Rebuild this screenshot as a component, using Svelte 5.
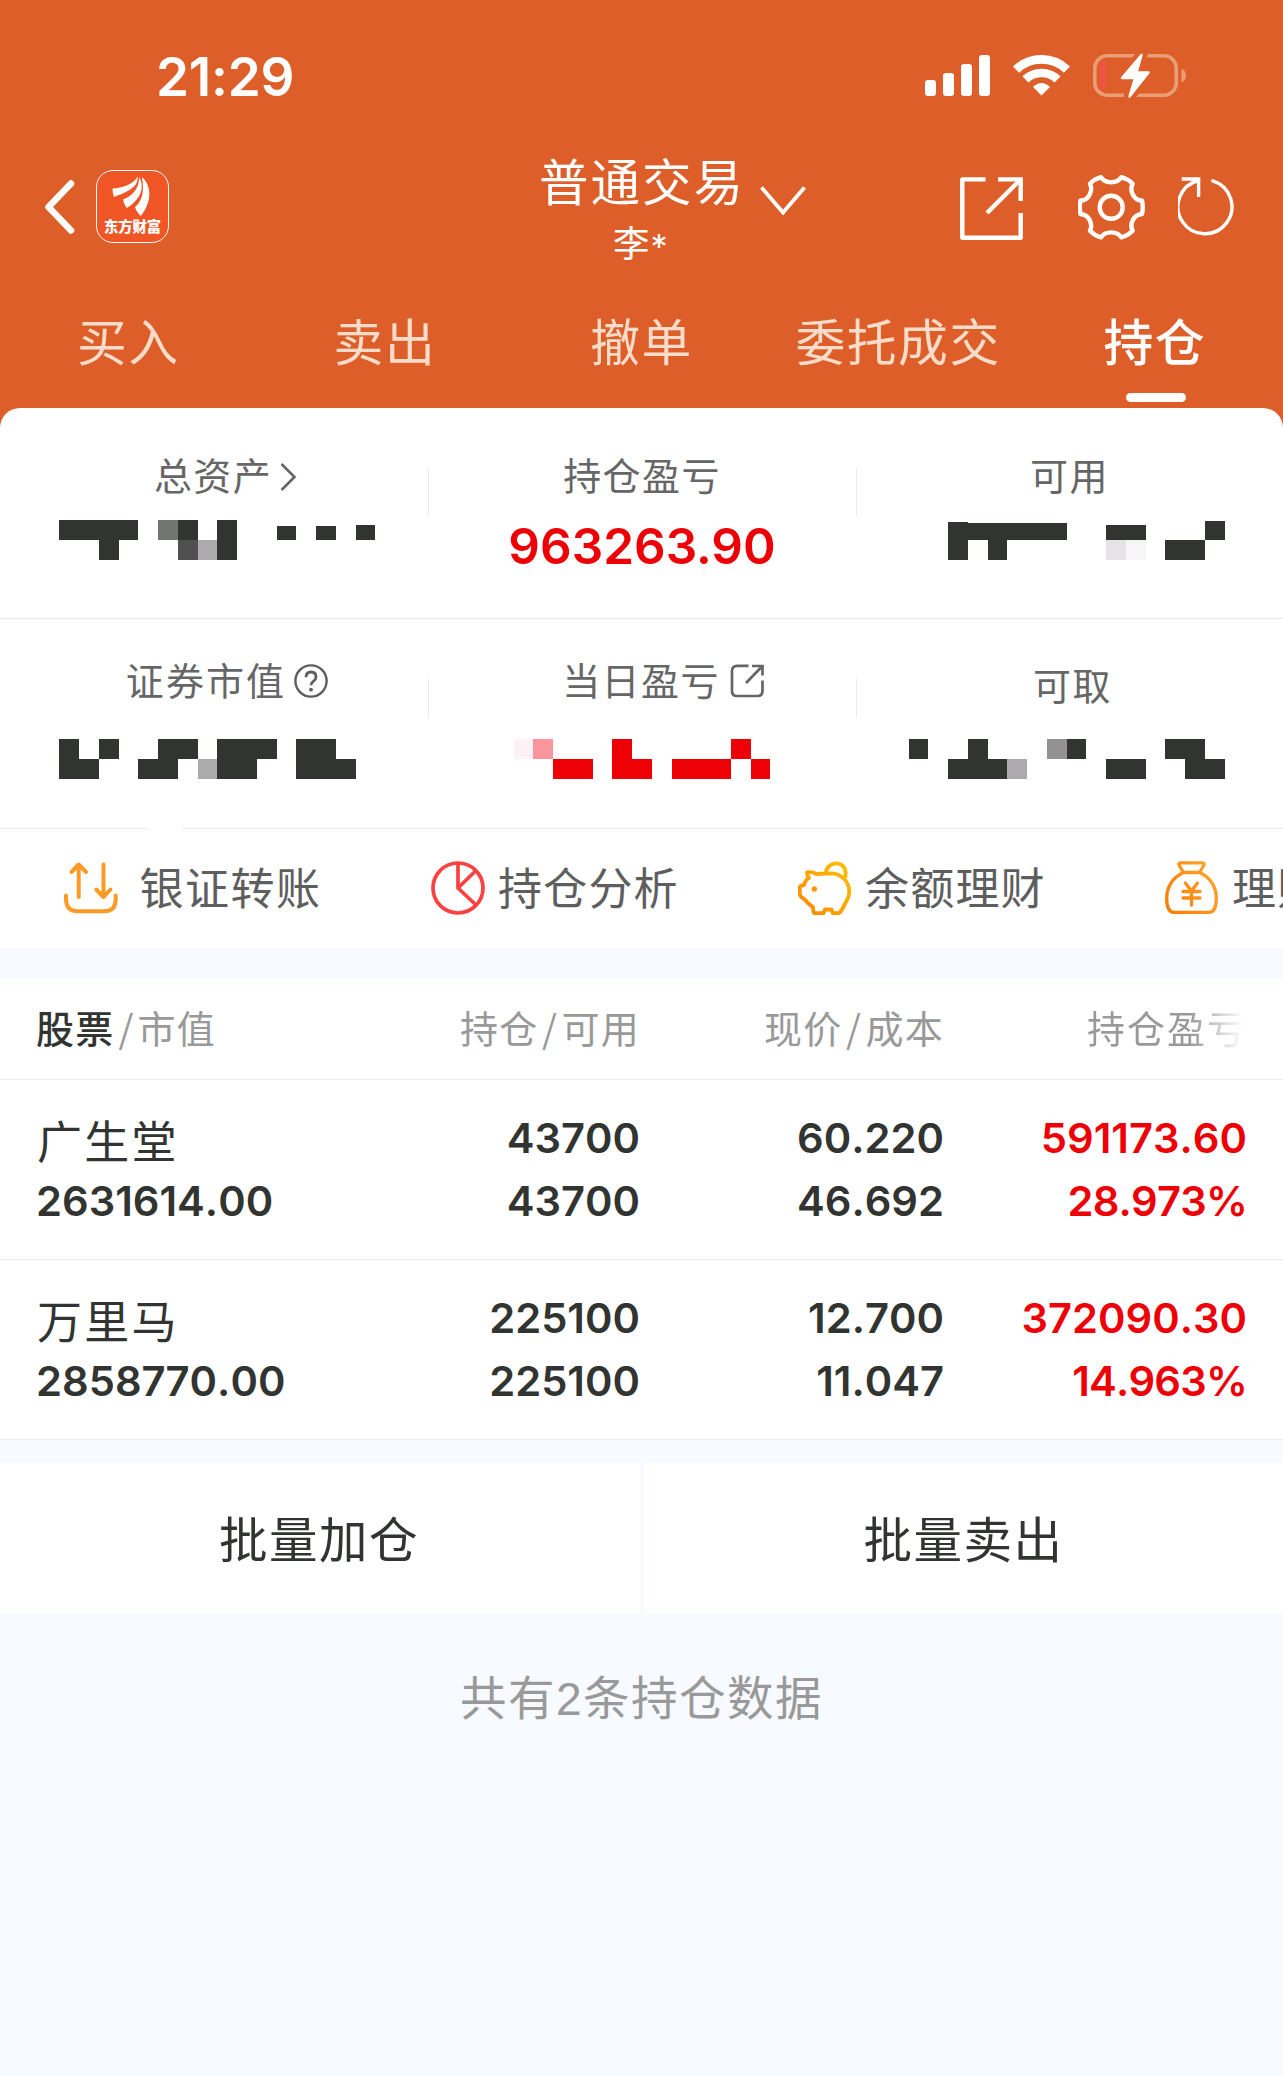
<script>
  const tabs = ['买入', '卖出', '撤单', '委托成交', '持仓'];
  const D = '#323431';
  const R = '#ee0007';

  // Masked amounts: blocks of [x, y, width, height, colour]
  const assets = [
    [59, 0, 79, 20, D], [99, 20, 20, 20, D], [158, 0, 20, 20, '#727572'], [178, 0, 20, 20, D],
    [178, 20, 20, 20, '#505051'], [198, 20, 19, 20, '#acaaad'], [217, 0, 20, 40, D],
    [277, 6, 19, 14, D], [316, 6, 20, 14, D], [356, 5, 19, 15, D]
  ];
  const available = [
    [948, 3, 119, 17, D], [948, 2, 20, 38, D], [988, 20, 19, 20, D], [1106, 5, 40, 15, D],
    [1106, 20, 20, 20, '#e6e2e6'], [1126, 20, 20, 20, '#f7f6f7'], [1165, 20, 40, 20, D], [1205, 1, 20, 19, D]
  ];
  const marketValue = [
    [59, 0, 20, 20, D], [99, 0, 20, 20, D], [59, 20, 40, 20, D], [158, 0, 40, 20, D], [138, 20, 40, 20, D],
    [198, 20, 19, 20, '#acaaad'], [217, 0, 60, 20, D], [217, 20, 40, 20, D], [296, 0, 40, 20, D], [296, 20, 60, 20, D]
  ];
  const today = [
    [514, 0, 19, 20, '#fff1f5'], [533, 0, 20, 20, '#f8959d'], [553, 20, 40, 20, R], [612, 0, 20, 20, R],
    [612, 20, 40, 20, R], [672, 20, 59, 20, R], [731, 0, 20, 20, R], [751, 20, 19, 20, R]
  ];
  const withdrawable = [
    [909, 0, 19, 20, D], [968, 0, 20, 20, D], [948, 20, 59, 20, D], [1007, 20, 20, 20, '#acaaad'],
    [1047, 0, 20, 20, '#949195'], [1067, 0, 19, 20, D], [1106, 20, 40, 20, D], [1165, 0, 40, 20, D], [1185, 20, 40, 20, D]
  ];

  const holdings = [
    { name: '广生堂', value: '2631614.00', qty: '43700', usable: '43700', price: '60.220', cost: '46.692', profit: '591173.60', rate: '28.973%' },
    { name: '万里马', value: '2858770.00', qty: '225100', usable: '225100', price: '12.700', cost: '11.047', profit: '372090.30', rate: '14.963%' }
  ];
</script>

{#snippet masked(blocks, col)}
  <svg class="mask" width="428" height="40" viewBox="{col * 428} 0 428 40" shape-rendering="crispEdges">
    {#each blocks as [x, y, w, h, fill]}
      <rect {x} {y} width={w} height={h} {fill} />
    {/each}
  </svg>
{/snippet}

<div class="app">
  <header>
    <div class="status">
      <span class="time">21:29</span>
      <div class="status-icons">
        <svg width="65" height="41" viewBox="0 0 65 41" fill="#fff">
          <rect x="0" y="25" width="11" height="16" rx="3" />
          <rect x="18" y="18" width="11" height="23" rx="3" />
          <rect x="36" y="9" width="11" height="32" rx="3" />
          <rect x="54" y="0" width="11" height="41" rx="3" />
        </svg>
        <svg class="wifi" width="57" height="42" viewBox="0 0 57 42" fill="none" stroke="#fff">
          <path d="M3 15.6A37 37 0 0 1 54 15.6" stroke-width="8.8" />
          <path d="M12.4 25.4A23.3 23.3 0 0 1 44.6 25.4" stroke-width="8.6" />
          <path d="M28.5 41.5L20 33Q28.5 24.8 37 33Z" fill="#fff" stroke="none" />
        </svg>
        <svg class="battery" width="94" height="46" viewBox="0 0 94 46">
          <rect x="1.8" y="2.8" width="81.5" height="39.4" rx="12.5" fill="none" stroke="#e99e76" stroke-width="3.6" />
          <rect x="6.5" y="8" width="6.5" height="29" rx="3" fill="#f05343" />
          <path d="M88.5 15.5Q93 17.5 93 22.5T88.5 29.5Z" fill="#e99e76" />
          <path d="M49 1.5L29 25H41.500L36 44L56 19.500H44Z" fill="#fff" stroke="#de5e29" stroke-width="11" stroke-linejoin="round" />
          <path d="M48.500 2L29 25H42L36.500 43.500L55.500 19.500H43.500Z" fill="#fff" stroke="#fff" stroke-width="2.500" stroke-linejoin="round" />
        </svg>
      </div>
    </div>

    <div class="nav">
      <svg class="back" width="32" height="54" viewBox="0 0 32 54" fill="none" stroke="#fff" stroke-width="6.500" stroke-linejoin="round" stroke-linecap="round">
        <path d="M27 3.500L4.500 27L27 50.500" />
      </svg>
      <div class="logo">
        <svg width="71" height="48" viewBox="0 0 71 48" fill="#fff">
          <path d="M15.700 17.500C25 17 37 13 40.500 5.500C42 16 30 21 17 26C15.800 23 15.500 20 15.700 17.500Z" />
          <path d="M26 28.500C36 25 42 17 42.300 6C49 19 41 30 29.800 37C28 34.500 26.500 31.500 26 28.500Z" />
          <path d="M38 36C45 30 47.500 22 45 6C55 15 55 31 43.800 45C41 42 38.500 39 38 36Z" />
        </svg>
        <span>东方财富</span>
      </div>
      <div class="title">
        <div class="account">普通交易</div>
        <div class="user">李<span>*</span></div>
      </div>
      <svg class="down" width="46" height="30" viewBox="0 0 46 30" fill="none" stroke="#fff" stroke-width="3.800">
        <path d="M1.500 1.500L23 26.500L44.500 1.500" />
      </svg>
      <div class="tools">
        <svg width="63" height="63" viewBox="0 0 63 63" fill="none" stroke="#fff" stroke-width="4.400" stroke-linejoin="round">
          <path d="M25.500 2.400H2.300V60.700H60.700V36" />
          <path d="M38 2.400H60.700V24" stroke-linejoin="miter" />
          <path d="M60 3L27 36" />
        </svg>
        <svg class="gear" width="67" height="65" viewBox="0 0 67 65" fill="none" stroke="#fff" stroke-width="4.400" stroke-linejoin="round">
          <path d="M23 2.200C27 9 39.300 9 43.300 2.200Q50 4 54.600 8.700C51 16 56 25.500 64 25.500Q65.500 32 64 39C56 39.500 51 48.500 54.600 55.700Q50 60.500 43.300 62.500C39.300 55.700 27 55.700 23 62.500Q16.500 60.500 12 55.700C15.500 48.500 10.500 39.500 2.500 39Q1 32 2.500 25.500C10.500 25.500 15.500 16 12 8.700Q16.500 4 23 2.200Z" />
          <circle cx="33.200" cy="32.300" r="11.500" />
        </svg>
        <svg width="58" height="60" viewBox="0 0 58 60" fill="none" stroke="#fff" stroke-width="3.400">
          <path d="M34.800 3.900A27 27 0 1 1 20.500 3.500" stroke-linecap="round" />
          <path d="M3.700 2H20.600V20" />
        </svg>
      </div>
    </div>

    <nav class="tabs">
      {#each tabs as tab, i}
        <div class="tab" class:active={i === 4}><span>{tab}</span></div>
      {/each}
    </nav>
  </header>

  <section class="summary">
    <div class="row">
      <div class="cell">
        <div class="label first">总资产<svg class="more" width="17" height="28" viewBox="0 0 17 28" fill="none" stroke="#666" stroke-width="2.600"><path d="M1.500 1L14.500 14L1.500 27" /></svg></div>
        {@render masked(assets, 0)}
      </div>
      <div class="cell">
        <div class="label">持仓盈亏</div>
        <div class="total">963263.90</div>
      </div>
      <div class="cell">
        <div class="label usable">可用</div>
        {@render masked(available, 2)}
      </div>
    </div>
    <div class="row second">
      <div class="cell">
        <div class="label first value">证券市值<svg class="help" width="34" height="34" viewBox="0 0 34 34" fill="none" stroke="#5e5e5e" stroke-width="2.400"><circle cx="17" cy="17" r="15.600" /><path d="M12 13.200Q12 8 17 8T22 13Q22 15.500 19.500 17.200T17 21.300" stroke-width="2.800" /><circle cx="17" cy="25.700" r="1.900" fill="#5e5e5e" stroke="none" /></svg></div>
        {@render masked(marketValue, 0)}
      </div>
      <div class="cell">
        <div class="label today">当日盈亏<svg class="open" width="34" height="34" viewBox="0 0 34 34" fill="none" stroke="#666" stroke-width="2.700"><path d="M18.500 1.800H7Q2 1.800 2 7V27Q2 32 7 32H27.500Q32.500 32 32.500 27V16.500" /><path d="M22 2H32.500V11.500" /><path d="M31.500 3L16 19" /></svg></div>
        {@render masked(today, 1)}
      </div>
      <div class="cell">
        <div class="label cash">可取</div>
        {@render masked(withdrawable, 2)}
      </div>
    </div>
    <div class="rule"><i></i><i></i></div>
    <div class="menu">
      <div class="item">
        <svg class="transfer" width="56" height="54" viewBox="0 0 56 54" fill="none" stroke="#fb9b26" stroke-width="4" stroke-linecap="round" stroke-linejoin="round">
          <path d="M15.700 36V3.500M8.500 11L15.700 3.500L23 11M40.500 3.500V36M33.300 28.500L40.500 36L47.500 28.500" />
          <path d="M3 34.500V38Q3 50.300 15 50.300H41Q52.700 50.300 52.700 38V34.500" />
        </svg>
        <span class="wide">银证转账</span>
      </div>
      <div class="item">
        <svg width="54" height="54" viewBox="0 0 54 54" fill="none" stroke="#fd4141" stroke-width="3.700" stroke-linejoin="round">
          <circle cx="27" cy="27" r="25" /><path d="M27 2V27L45 9.500M27 27L45 44" />
        </svg>
        <span>持仓分析</span>
      </div>
      <div class="item">
        <svg width="54" height="54" viewBox="0 0 54 54" fill="none" stroke="url(#gold)" stroke-width="3.800" stroke-linejoin="round">
          <defs><linearGradient id="gold" x1="0" y1="54" x2="54" y2="0" gradientUnits="userSpaceOnUse"><stop offset="0" stop-color="#ff8500" /><stop offset="1" stop-color="#ffc400" /></linearGradient></defs>
          <path d="M9 11.300Q15 10.500 18 13Q27 12.500 33 12.300C43 12.500 51.300 20 51.300 31Q51 36 49 39L44 48.500Q42 52.300 39.500 52.200H35L33.500 48.500H27L25.500 52.200H16.500Q15 52 15 46Q9 42 7 38.500Q2 36 1.800 33V26Q2.500 24.500 6 24Q7.500 18.500 11 17Q9 14.500 9 11.300Z" />
          <path d="M27.700 12.300C29 -1.500 51 -1.500 47.200 16.500" />
          <circle cx="16.300" cy="28" r="2.700" fill="#fb9800" stroke="none" />
        </svg>
        <span>余额理财</span>
      </div>
      <div class="item">
        <svg width="54" height="54" viewBox="0 0 54 54" fill="none" stroke="url(#amber)" stroke-width="3.300" stroke-linejoin="round" stroke-linecap="round">
          <defs><linearGradient id="amber" x1="0" y1="54" x2="54" y2="20" gradientUnits="userSpaceOnUse"><stop offset="0" stop-color="#ff7800" /><stop offset="1" stop-color="#ffa32d" /></linearGradient></defs>
          <path d="M18.500 11.500L14 4Q13.500 2 15.500 1.800H37.500Q39.500 2 39 4L34.500 11.500ZM18.500 11.500C7 16.500 1.700 27 1.700 37C1.700 43 3 51.300 9 51.300H44C50 51.300 51.300 43 51.300 37C51.300 27 46 16.500 34.500 11.500" />
          <path d="M20.300 22L26.500 30L32.500 22M18 30.500H35M18 37H35M26.500 30V44" />
        </svg>
        <span>理财</span>
      </div>
    </div>
  </section>

  <section class="holdings">
    <div class="thead">
      <div class="th left"><b>股票</b><s>/</s>市值</div>
      <div class="th">持仓<s>/</s>可用</div>
      <div class="th">现价<s>/</s>成本</div>
      <div class="th fade">持仓盈亏</div>
    </div>
    {#each holdings as h}
      <div class="stock">
        <div class="col left"><span class="name">{h.name}</span><span>{h.value}</span></div>
        <div class="col"><span>{h.qty}</span><span>{h.usable}</span></div>
        <div class="col"><span>{h.price}</span><span>{h.cost}</span></div>
        <div class="col red"><span>{h.profit}</span><span class="rate">{h.rate}</span></div>
      </div>
    {/each}
  </section>

  <div class="actions">
    <div class="action">批量加仓</div>
    <div class="action">批量卖出</div>
  </div>
  <p class="count">共有<span>2</span>条持仓数据</p>
</div>

<style>
  :global(body) { margin: 0; background: #f7faff; }
  .app {
    width: 1283px; height: 2076px; overflow: hidden;
    background: #f7faff; color: #323431;
    font-family: "Noto Sans CJK SC", sans-serif;
    white-space: nowrap;
  }
  .app * { box-sizing: border-box; }
  svg { display: block; flex: none; }

  header { height: 428px; background: #de5e29; color: #fff; }
  .status { height: 130px; padding: 45px 96px 0 156px; display: flex; justify-content: space-between; }
  .time { font: 600 53px/64px Inter, sans-serif; letter-spacing: -0.200px; }
  .status-icons { display: flex; align-items: flex-start; padding-top: 10px; }
  .wifi { margin: -1px 0 0 23px; }
  .battery { margin: -2px 0 0 23px; }

  .nav { height: 154px; padding-left: 44px; display: flex; align-items: flex-start; }
  .back { margin-top: 50px; }
  .logo {
    width: 73px; height: 73px; margin: 40px 0 0 20px; border: 1.500px solid #fff; border-radius: 17px;
    background: #f05526; display: flex; flex-direction: column; align-items: center;
  }
  .logo span { font: 900 14.300px/20px "Noto Sans CJK SC", sans-serif; margin-top: -3px; }
  .title { width: 210px; margin-left: 370px; padding-top: 18px; }
  .account { font-size: 49.500px; line-height: 64px; letter-spacing: 2px; }
  .user { font-size: 36.500px; line-height: 44px; height: 44px; margin-top: 8px; padding-left: 74px; letter-spacing: 1px; }
  .user span { font: 400 34px/0 Inter, sans-serif; vertical-align: -2px; }
  .down { margin: 56px 0 0 11px; }
  .tools { display: flex; align-items: flex-start; margin: 47px 0 0 154px; }
  .gear { margin: -2px 33px 0 55px; }

  .tabs { height: 124px; display: grid; grid-template-columns: repeat(5, 1fr); }
  .tab {
    position: relative; text-align: center; color: #f9dcc9;
    font-size: 49.800px; line-height: 64px; letter-spacing: 1.500px; padding: 23px 0 0 0;
  }
  .active { color: #fff; font-weight: 500; }
  .active::after {
    content: ""; position: absolute; left: 100px; top: 109px; width: 60px; height: 9px;
    border-radius: 5px; background: #fff;
  }

  .summary { position: relative; margin-top: -20px; height: 540px; background: #fff; border-radius: 20px 20px 0 0; overflow: hidden; }
  .row { height: 211px; display: grid; grid-template-columns: 428px 428px 427px; border-bottom: 1px solid #ebebeb; }
  .second { height: 209px; border-bottom: 0; }
  .cell { position: relative; overflow: hidden; }
  .cell + .cell::before { content: ""; position: absolute; left: 0; top: 60px; width: 1px; height: 48px; background: #ebebeb; }
  .second .cell + .cell::before { top: 59px; height: 40px; }
  .label {
    height: 50px; margin-top: 41px; padding: 0;
    display: flex; align-items: center; justify-content: center;
    color: #666; font-size: 38px; line-height: 50px; letter-spacing: 1.400px;
  }
  .second .label { margin-top: 35px; margin-bottom: 35px; }
  .label.first { padding-left: 23px; }
  .label.value { padding-left: 26px; letter-spacing: 2.100px; }
  .more { margin: 5px 0 0 8px; }
  .help { margin: 4px 0 0 8px; }
  .label.today { padding-left: 42px; }
  .open { margin: 4px 0 0 10px; }
  .second .cash { padding-left: 6px; margin-top: 40px; margin-bottom: 30px; }
  .mask { margin-top: 21px; }
  .second .mask { margin-top: 0; }
  .total { font: 600 49.500px/60px Inter, sans-serif; color: #ee0007; text-align: center; margin-top: 17px; }

  .rule { display: flex; gap: 34px; height: 1px; }
  .rule i { background: #ebebeb; width: 148px; }
  .rule i + i { flex: 1; }
  .menu { display: flex; padding: 32px 0 0 64px; }
  .item { width: 367px; flex: none; display: flex; align-items: center; }
  .transfer { margin-left: -1.500px; }
  .item span { font-size: 44px; line-height: 54px; letter-spacing: 1.200px; color: #5e5e5e; margin: -5px 0 0 13px; }
  .item .wide { margin-left: 21px; letter-spacing: 1.500px; }

  .holdings { margin-top: 30px; background: #fff; }
  .thead, .stock { display: grid; grid-template-columns: 337px 303px 304px 303px; border-bottom: 1px solid #ebebeb; }
  .thead { height: 102px; }
  .th { text-align: right; font-size: 38px; line-height: 98px; letter-spacing: 1.200px; color: #999; }
  .th.left { padding-left: 36px; text-align: left; }
  .col.left { padding-left: 36px; text-align: left; }
  .th b { font-weight: 500; color: #323431; }
  .th s { text-decoration: none; margin: 0 3.500px; }
  .th.left s { margin: 0 3px 0 4px; }
  .fade { letter-spacing: 2px; background: linear-gradient(90deg, #999 81%, #fff 99%); background-clip: text; color: transparent; }
  .stock { height: 180px; padding-top: 27px; }
  .col { display: flex; flex-direction: column; font: 600 41.700px/63px Inter, sans-serif; font-kerning: none; text-align: right; }
  .col .name { font: 400 45px/63px "Noto Sans CJK SC", sans-serif; letter-spacing: 2.300px; height: 62px; margin-top: 1px; padding-left: 1px; }
  .red { color: #ee0007; }
  .rate { letter-spacing: -0.800px; }

  .actions { display: grid; grid-template-columns: 640px 639px; gap: 4px; margin-top: 23px; }
  .action { height: 151px; background: #fff; text-align: center; font-size: 48.500px; line-height: 149px; letter-spacing: 1.500px; padding-right: 2px; }
  .action + .action { padding-right: 0; }
  .count { margin: 0; padding-top: 49px; text-align: center; font-size: 46.500px; line-height: 64px; letter-spacing: 1.500px; color: #999; }
  .count span { font: 400 46px/0 "Liberation Sans", sans-serif; }
</style>
